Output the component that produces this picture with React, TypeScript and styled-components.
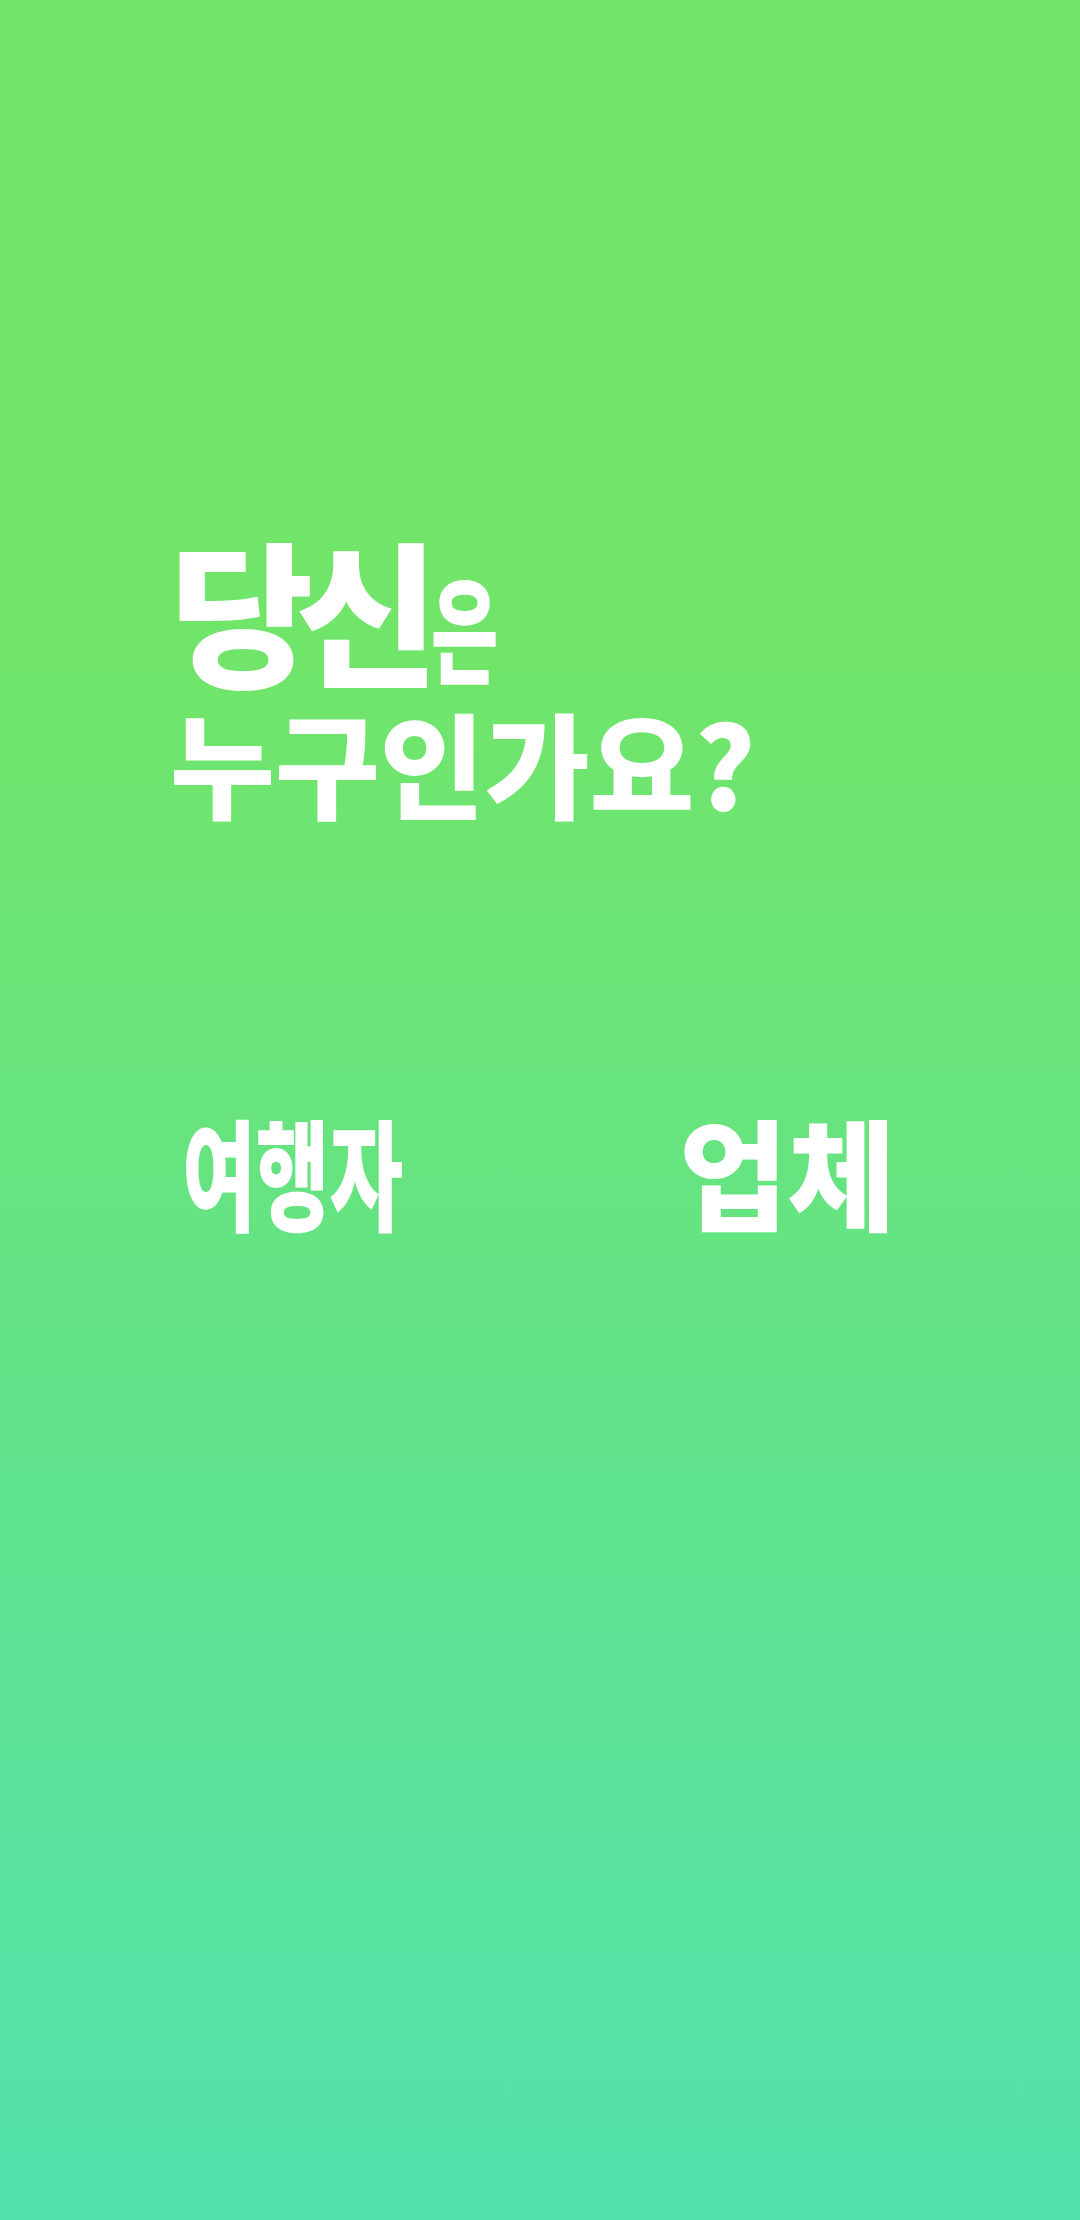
import React from "react";
import styled, { createGlobalStyle } from "styled-components";

const Global = createGlobalStyle`
  html, body { margin: 0; padding: 0; }
  body { font-family: "Noto Sans CJK KR", "Noto Sans", sans-serif; }
`;

const Screen = styled.div`
  width: 1080px;
  height: 2220px;
  box-sizing: border-box;
  background: linear-gradient(180deg, #70e56a 0%, #70e56a 30%, #51e1ad 100%);
  display: flex;
  flex-direction: column;
  padding-top: 529px;
  color: #ffffff;
  font-family: "Noto Sans CJK KR", "Noto Sans", sans-serif;
`;

const Title = styled.h1`
  margin: 0 0 0 170px;
  display: flex;
  flex-direction: column;
  align-items: flex-start;
  font-weight: 900;
  font-size: 114px;
  line-height: 1;
`;

const FirstLine = styled.div`
  display: flex;
  align-items: baseline;
  white-space: nowrap;
`;

const Name = styled.span`
  font-size: 156px;
  letter-spacing: -18px;
`;

const Particle = styled.span`
  font-size: 116px;
  margin-left: 10px;
  transform: scaleX(0.63);
  transform-origin: left center;
`;

const Question = styled.div`
  margin-top: 19px;
  font-size: 114px;
  white-space: nowrap;
`;

const Choices = styled.div`
  margin-top: 292px;
  display: grid;
  grid-template-columns: 494px 494px;
  justify-content: center;
`;

const Choice = styled.button`
  border: none;
  background: transparent;
  color: #ffffff;
  padding: 0;
  display: flex;
  align-items: center;
  justify-content: center;
  font-family: "Noto Sans CJK KR", "Noto Sans", sans-serif;
  font-weight: 900;
  font-size: 120px;
  line-height: 1;
  cursor: pointer;
`;

const Label = styled.span<{ $sx: number }>`
  display: inline-block;
  transform: scaleX(${(p) => p.$sx});
  white-space: nowrap;
`;

export default function App() {
  return (
    <>
      <Global />
      <Screen>
        <Title>
          <FirstLine>
            <Name>당신</Name>
            <Particle>은</Particle>
          </FirstLine>
          <Question>누구인가요?</Question>
        </Title>
        <Choices>
          <Choice>
            <Label $sx={0.667}>여행자</Label>
          </Choice>
          <Choice>
            <Label $sx={0.98}>업체</Label>
          </Choice>
        </Choices>
      </Screen>
    </>
  );
}
